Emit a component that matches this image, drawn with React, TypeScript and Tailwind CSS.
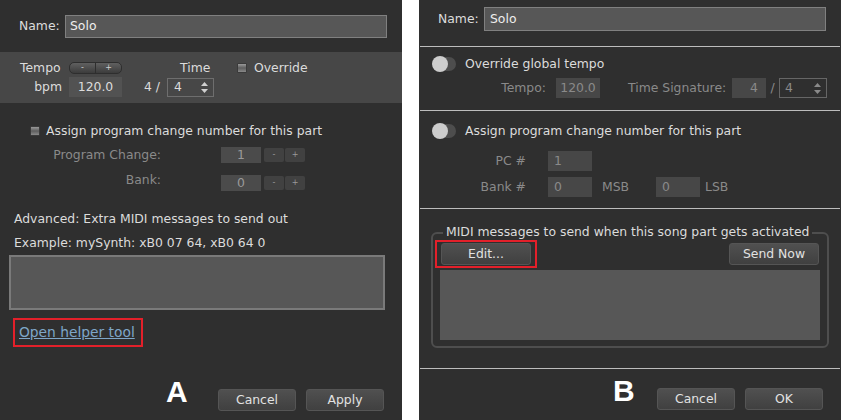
import React from "react";

const font = "font-['DejaVu_Sans',_'Liberation_Sans',_sans-serif]";

const Arrows = ({ color = "#d0d0d0" }: { color?: string }) => (
  <svg width="7" height="11" viewBox="0 0 7 11">
    <path d="M3.5 0 L7 4 H0 Z" fill={color} />
    <path d="M3.5 11 L7 7 H0 Z" fill={color} />
  </svg>
);

const Check = () => (
  <div className="w-[10px] h-[10px] shrink-0 rounded-[1px] bg-gradient-to-b from-[#9a9a9a] via-[#5e5e5e] to-[#8a8a8a] border border-[#3a3a3a]" />
);

const Toggle = () => (
  <div className="relative w-[24px] h-[16px] shrink-0">
    <div className="absolute left-[2px] right-0 top-[1px] h-[14px] rounded-full bg-[#4d4d4d]" />
    <div className="absolute left-0 top-0 w-[16px] h-[16px] rounded-full bg-[#cdcdcd]" />
  </div>
);

const Button = ({ label, w = "w-[78px]" }: { label: string; w?: string }) => (
  <div
    className={`${w} h-[22px] shrink-0 flex items-center justify-center rounded-[3px] border border-[#555] bg-gradient-to-b from-[#505050] to-[#404040] text-[#e2e2e2] text-[12.4px]`}
  >
    {label}
  </div>
);

const PlusMinus = () => (
  <div className="w-[53px] h-[12px] shrink-0 flex rounded-[5px] border border-[#2e2e2e] bg-gradient-to-b from-[#606060] to-[#3c3c3c] text-[8px] leading-[10px] text-[#cfcfcf]">
    <div className="flex-1 flex items-center justify-center border-r border-[#2e2e2e]">-</div>
    <div className="flex-1 flex items-center justify-center">+</div>
  </div>
);

const SmallPM = () => (
  <div className="flex gap-[1px] shrink-0 text-[8px] leading-[10px] text-[#9a9a9a]">
    <div className="w-[20px] h-[14px] rounded-[2px] bg-[#414141] flex items-center justify-center">-</div>
    <div className="w-[20px] h-[14px] rounded-[2px] bg-[#414141] flex items-center justify-center">+</div>
  </div>
);

const PanelA = () => (
  <div className="w-[402px] h-[420px] shrink-0 bg-[#2f2f2f] flex flex-col text-[12.4px] text-[#dcdcdc]">
    <div className="flex items-center h-[23px] mt-[15px] pl-[19px]">
      <span className="w-[46px]">Name:</span>
      <div className="w-[322px] h-[23px] bg-[#575757] border border-[#808080] pl-[4px] flex items-center text-[#eeeeee]">
        Solo
      </div>
    </div>

    <div className="mt-[14px] h-[51px] bg-[#474747] pt-[8px] flex flex-col">
      <div className="flex items-center h-[16px] pl-[20px]">
        <span className="w-[49px]">Tempo</span>
        <PlusMinus />
        <span className="ml-[58px] w-[57px]">Time</span>
        <Check />
        <span className="ml-[7px]">Override</span>
      </div>
      <div className="flex items-center h-[20px] mt-[1px] pl-[20px]">
        <span className="w-[49px] text-right pr-[7px]">bpm</span>
        <div className="w-[53px] h-[20px] bg-[#525252] flex items-center justify-center">120.0</div>
        <span className="ml-[22px] w-[23px]">4 /</span>
        <div className="w-[47px] h-[19px] border border-[#6e6e6e] flex items-center justify-between pl-[6px] pr-[5px]">
          <span>4</span>
          <Arrows />
        </div>
      </div>
    </div>

    <div className="flex items-center h-[16px] mt-[20px] pl-[30px]">
      <Check />
      <span className="ml-[6px]">Assign program change number for this part</span>
    </div>
    <div className="flex items-center h-[16px] mt-[8px] text-[#8a8a8a]">
      <span className="w-[161px] text-right">Program Change:</span>
      <div className="ml-[60px] w-[40px] h-[16px] bg-[#4b4b4b] flex items-center justify-center text-[#9a9a9a]">1</div>
      <div className="ml-[3px]">
        <SmallPM />
      </div>
    </div>
    <div className="flex items-center h-[16px] mt-[12px] text-[#8a8a8a]">
      <span className="w-[161px] text-right -mt-[5px]">Bank:</span>
      <div className="ml-[60px] w-[40px] h-[16px] bg-[#4b4b4b] flex items-center justify-center text-[#9a9a9a]">0</div>
      <div className="ml-[3px]">
        <SmallPM />
      </div>
    </div>

    <div className="h-[16px] mt-[20px] pl-[14px] flex items-center">Advanced: Extra MIDI messages to send out</div>
    <div className="h-[16px] mt-[8px] pl-[14px] flex items-center">Example: mySynth: xB0 07 64, xB0 64 0</div>
    <div className="mt-[4px] ml-[9px] w-[376px] h-[55px] bg-[#575757] border-2 border-[#7a7a7a]" />

    <div className="mt-[8px] ml-[13px] w-[130px] h-[29px] border-2 border-[#e3202a] pl-[4px] flex items-center">
      <span className="underline text-[#7ea6c8] text-[13.8px]">Open helper tool</span>
    </div>

    <div className="mt-[30px] flex items-start">
      <span className="ml-[166px] w-[52px] font-['Liberation_Sans',_sans-serif] font-bold text-[30px] leading-[30px] text-white">
        A
      </span>
      <div className="mt-[12px] flex gap-[10px]">
        <Button label="Cancel" />
        <Button label="Apply" />
      </div>
    </div>
  </div>
);

const Sep = ({ mt }: { mt: string }) => <div className={`${mt} ml-[1px] w-[420px] h-[1px] bg-[#bdbdbd]`} />;

const PanelB = () => (
  <div className="w-[422px] h-[420px] shrink-0 bg-[#2f2f2f] flex flex-col text-[12.4px] text-[#dcdcdc]">
    <div className="flex items-center h-[24px] mt-[7px] pl-[19px]">
      <span className="w-[46px]">Name:</span>
      <div className="w-[342px] h-[24px] bg-[#575757] border border-[#808080] pl-[5px] flex items-center text-[#eeeeee]">
        Solo
      </div>
    </div>
    <Sep mt="mt-[15px]" />

    <div className="flex items-center h-[16px] mt-[9px] pl-[13px]">
      <Toggle />
      <span className="ml-[9px]">Override global tempo</span>
    </div>
    <div className="flex items-center h-[20px] mt-[6px] text-[#8a8a8a]">
      <span className="w-[127px] text-right">Tempo:</span>
      <div className="ml-[10px] w-[44px] h-[20px] bg-[#474747] flex items-center justify-center">120.0</div>
      <span className="ml-[28px] w-[104px]">Time Signature:</span>
      <div className="w-[34px] h-[20px] bg-[#474747] flex items-center justify-end pr-[8px]">4</div>
      <span className="w-[13px] text-center">/</span>
      <div className="w-[48px] h-[20px] border border-[#666] flex items-center justify-between pl-[5px] pr-[5px]">
        <span>4</span>
        <Arrows color="#8a8a8a" />
      </div>
    </div>
    <Sep mt="mt-[12px]" />

    <div className="flex items-center h-[16px] mt-[12px] pl-[13px]">
      <Toggle />
      <span className="ml-[9px]">Assign program change number for this part</span>
    </div>
    <div className="flex items-center h-[20px] mt-[12px] text-[#8a8a8a]">
      <span className="w-[107px] text-right">PC #</span>
      <div className="ml-[22px] w-[44px] h-[20px] bg-[#474747] flex items-center pl-[6px]">1</div>
    </div>
    <div className="flex items-center h-[20px] mt-[6px] text-[#8a8a8a]">
      <span className="w-[107px] text-right">Bank #</span>
      <div className="ml-[22px] w-[44px] h-[20px] bg-[#474747] flex items-center pl-[6px]">0</div>
      <span className="ml-[10px] w-[54px]">MSB</span>
      <div className="w-[44px] h-[20px] bg-[#474747] flex items-center pl-[6px]">0</div>
      <span className="ml-[5px]">LSB</span>
    </div>
    <Sep mt="mt-[11px]" />

    <div className="relative mt-[23px] ml-[12px] w-[398px] h-[116px] rounded-[6px] border-2 border-[#4e4e4e] flex flex-col">
      <span className="absolute -top-[10px] left-[10px] px-[3px] bg-[#2f2f2f] leading-[16px]">
        MIDI messages to send when this song part gets activated
      </span>
      <div className="flex items-start mt-[6px]">
        <div className="ml-[2px] border-2 border-[#e3202a] px-[4px] pt-[1px] pb-[1px]">
          <Button label="Edit..." w="w-[90px]" />
        </div>
        <div className="ml-auto mr-[8px] mt-[3px]">
          <Button label="Send Now" w="w-[90px]" />
        </div>
      </div>
      <div className="mt-[2px] ml-[7px] w-[380px] h-[70px] bg-[#575757]" />
    </div>

    <Sep mt="mt-[20px]" />
    <div className="mt-[7px] flex items-start">
      <span className="ml-[194px] w-[44px] font-['Liberation_Sans',_sans-serif] font-bold text-[30px] leading-[30px] text-white">
        B
      </span>
      <div className="mt-[12px] flex gap-[10px]">
        <Button label="Cancel" />
        <Button label="OK" />
      </div>
    </div>
  </div>
);

export default function App() {
  return (
    <div className={`${font} w-[841px] h-[420px] bg-white flex gap-[17px] overflow-hidden`}>
      <PanelA />
      <PanelB />
    </div>
  );
}
